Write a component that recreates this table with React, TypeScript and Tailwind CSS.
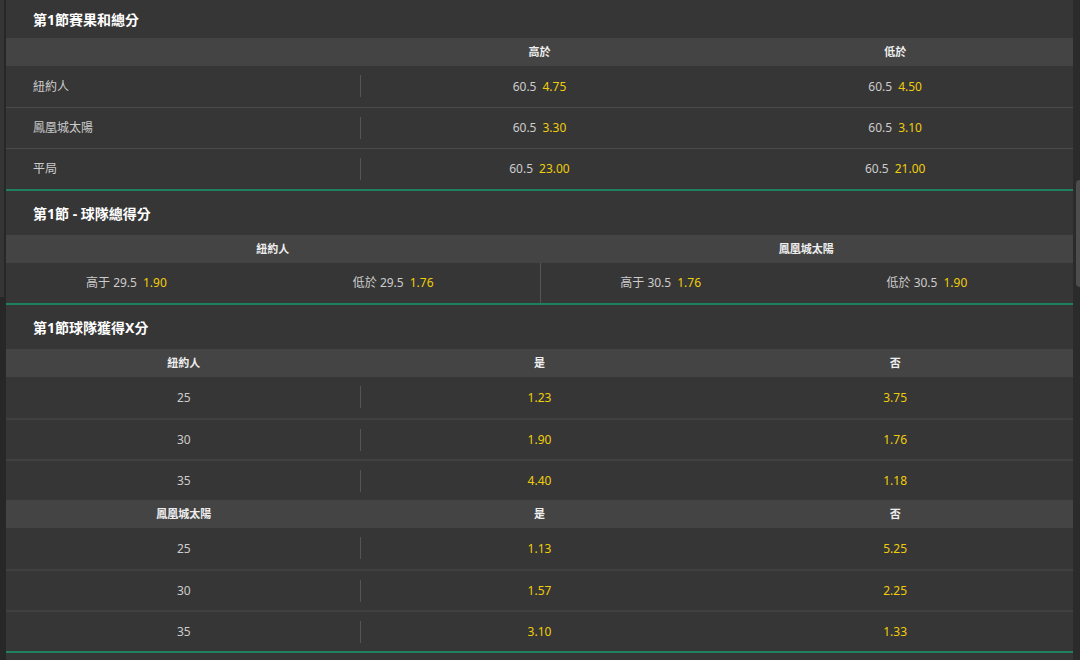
import React from 'react';

const font = { fontFamily: '"Noto Sans", "Noto Sans CJK TC", sans-serif' };

const Odd = ({ v }: { v: string }) => <span className="text-[#f0cd0b]">{v}</span>;

const Title = ({ text, h }: { text: string; h: string }) => (
  <div className={`${h} flex items-center pl-[27px] text-[14px] font-bold text-white`}>{text}</div>
);

const HeadRow = ({ cells, cols }: { cells: string[]; cols: string }) => (
  <div className={`grid ${cols} h-[28px] bg-[#444444] text-[11px] font-bold text-[#eeeeee]`}>
    {cells.map((c, i) => (
      <div key={i} className="flex items-center justify-center">{c}</div>
    ))}
  </div>
);

const Sep = () => <div className="absolute -left-[2px] top-[9px] h-[22px] w-px bg-[#555555]" />;

const GreenLine = () => <div className="h-[2px] bg-[#1f8060]" />;

const Section1 = () => {
  const rows = [
    { name: '紐約人', over: '4.75', under: '4.50' },
    { name: '鳳凰城太陽', over: '3.30', under: '3.10' },
    { name: '平局', over: '23.00', under: '21.00' },
  ];
  return (
    <div>
      <Title text="第1節賽果和總分" h="h-[38px]" />
      <HeadRow cells={['', '高於', '低於']} cols="grid-cols-3" />
      {rows.map((r, i) => (
        <div key={r.name} className={`grid grid-cols-3 h-[41px] text-[12px] text-[#cccccc] ${i > 0 ? 'border-t border-[#4a4a4a]' : ''}`}>
          <div className="flex items-center pl-[27px]">{r.name}</div>
          <div className="relative flex items-center justify-center gap-[6px]">
            <Sep />
            <span>60.5</span>
            <Odd v={r.over} />
          </div>
          <div className="flex items-center justify-center gap-[6px]">
            <span>60.5</span>
            <Odd v={r.under} />
          </div>
        </div>
      ))}
      <GreenLine />
    </div>
  );
};

const Section2 = () => {
  const teams = [
    { name: '紐約人', line: '29.5', over: '1.90', under: '1.76' },
    { name: '鳳凰城太陽', line: '30.5', over: '1.76', under: '1.90' },
  ];
  return (
    <div>
      <Title text="第1節 - 球隊總得分" h="h-[44px]" />
      <HeadRow cells={teams.map((t) => t.name)} cols="grid-cols-2" />
      <div className="grid grid-cols-2 h-[40px] text-[12px] text-[#cccccc]">
        {teams.map((t, i) => (
          <div key={t.name} className={`grid grid-cols-2 ${i > 0 ? 'border-l border-[#555555]' : ''}`}>
            <div className="flex items-center justify-center gap-[6px] pr-[26px]">
              <span>高于 {t.line}</span>
              <Odd v={t.over} />
            </div>
            <div className="flex items-center justify-center gap-[6px] pr-[26px]">
              <span>低於 {t.line}</span>
              <Odd v={t.under} />
            </div>
          </div>
        ))}
      </div>
      <GreenLine />
    </div>
  );
};

const XBlock = ({ team, rows }: { team: string; rows: [string, string, string][] }) => (
  <>
    <HeadRow cells={[team, '是', '否']} cols="grid-cols-3" />
    {rows.map(([pts, yes, no], i) => (
      <div key={pts} className={`grid grid-cols-3 h-[41px] text-[12px] text-[#cccccc] ${i > 0 ? 'border-t-2 border-[#404040]' : ''}`}>
        <div className="flex items-center justify-center">{pts}</div>
        <div className="relative flex items-center justify-center">
          <Sep />
          <Odd v={yes} />
        </div>
        <div className="flex items-center justify-center">
          <Odd v={no} />
        </div>
      </div>
    ))}
  </>
);

const Section3 = () => (
  <div>
    <Title text="第1節球隊獲得X分" h="h-[44px]" />
    <XBlock team="紐約人" rows={[['25', '1.23', '3.75'], ['30', '1.90', '1.76'], ['35', '4.40', '1.18']]} />
    <XBlock team="鳳凰城太陽" rows={[['25', '1.13', '5.25'], ['30', '1.57', '2.25'], ['35', '3.10', '1.33']]} />
    <GreenLine />
  </div>
);

export default function App() {
  return (
    <div className="flex h-[660px] w-[1080px] overflow-hidden bg-[#363636]" style={font}>
      <div className="w-[6px] shrink-0 bg-[#272727]">
        <div className="h-[297px] w-[4px] bg-[#353535]" />
      </div>
      <div className="flex-1 min-w-0">
        <Section1 />
        <Section2 />
        <Section3 />
      </div>
      <div className="w-[7px] shrink-0 bg-[#2b2b2b] pt-[180px] pl-[3px]">
        <div className="h-[107px] w-[4px] rounded-l-sm bg-[#4d4d4d]" />
      </div>
    </div>
  );
}
